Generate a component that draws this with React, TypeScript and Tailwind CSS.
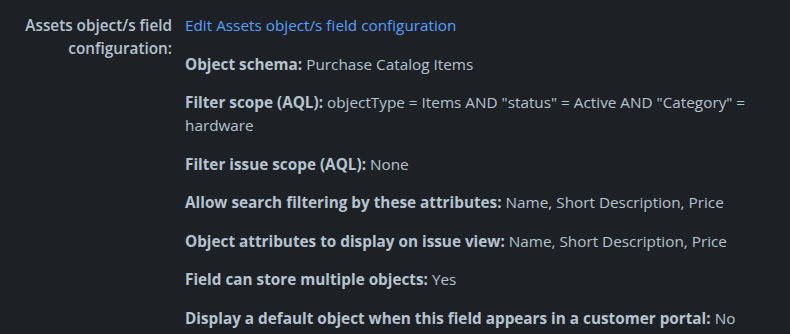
import React from "react";

interface Setting {
    label: string;
    value: string;
}

const settings: Setting[] = [
    { label: "Object schema:", value: "Purchase Catalog Items" },
    { label: "Filter scope (AQL):", value: 'objectType = Items AND "status" = Active AND "Category" = hardware' },
    { label: "Filter issue scope (AQL):", value: "None" },
    { label: "Allow search filtering by these attributes:", value: "Name, Short Description, Price" },
    { label: "Object attributes to display on issue view:", value: "Name, Short Description, Price" },
    { label: "Field can store multiple objects:", value: "Yes" },
    { label: "Display a default object when this field appears in a customer portal:", value: "No" },
];

const App: React.FC = () => {
    return (
        <div
            className="w-[790px] h-[334px] overflow-hidden bg-[#1d2125] text-[#b6c2cf] text-[15.3px] leading-[23px]"
            style={{ fontFamily: '"Open Sans", "Noto Sans", sans-serif' }}
        >
            <div className="flex pt-[14px]">
                <div className="w-[172px] shrink-0 pl-[10px] text-right font-semibold">
                    Assets object/s field configuration:
                </div>
                <div className="flex w-[600px] flex-col gap-[15.5px] pl-[13px]">
                    <a href="#" className="text-[#579dff]">
                        Edit Assets object/s field configuration
                    </a>
                    {settings.map((s) => (
                        <p key={s.label}>
                            <span className="font-bold">{s.label}</span> {s.value}
                        </p>
                    ))}
                </div>
            </div>
        </div>
    );
};

export default App;
